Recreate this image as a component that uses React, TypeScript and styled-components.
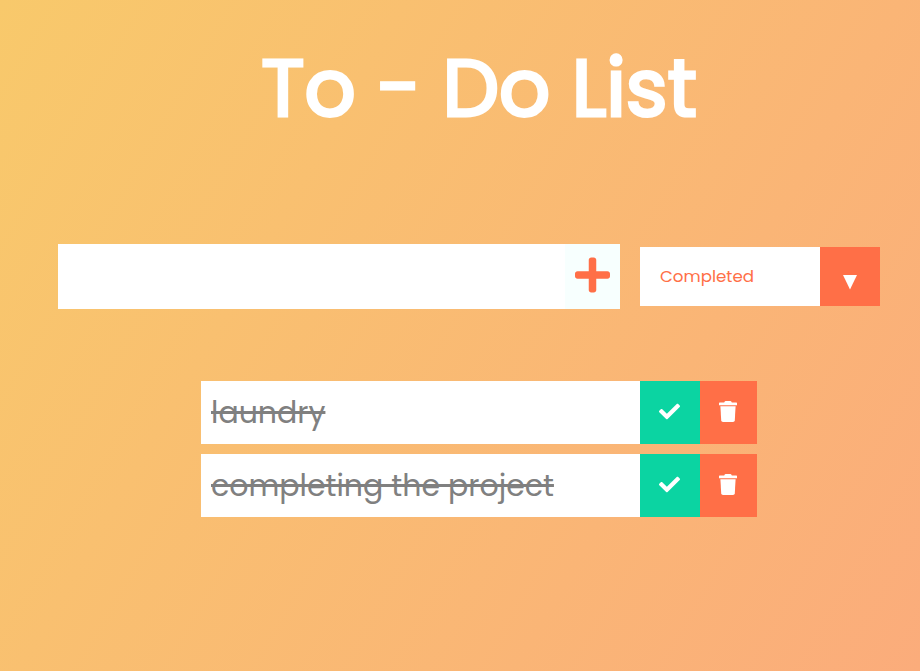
import React from "react";
import styled, { createGlobalStyle } from "styled-components";
import { FaCheck, FaPlus } from "react-icons/fa";

const GlobalStyle = createGlobalStyle`
  * { box-sizing: border-box; margin: 0; padding: 0; }
  body {
    min-height: 100vh;
    color: #fff;
    font-family: Poppins, Inter, sans-serif;
    background: linear-gradient(120deg, #f8c96b, #fbac7b);
  }
`;

const Header = styled.header`
  display: flex;
  justify-content: center;
  height: 244px;
  padding: 28px 0 0 38px;
`;

const Title = styled.h1`
  font-size: 80px;
  font-weight: 400;
  line-height: 121px;
  white-space: nowrap;
  -webkit-text-stroke: 3.2px #fff;
`;

const Form = styled.form`
  display: flex;
  align-items: center;
  height: 65px;
  margin-left: 58px;
`;

const TaskInput = styled.input`
  width: 507px;
  height: 65px;
  padding: 8px;
  border: none;
  outline: none;
  background: #fff;
  color: #ff6f47;
  font: inherit;
  font-size: 32px;
`;

const AddButton = styled.button`
  display: flex;
  align-items: center;
  justify-content: center;
  width: 55px;
  height: 65px;
  padding-bottom: 3px;
  border: none;
  background: #f7fffe;
  color: #ff6f47;
  font-size: 40px;

  svg {
    width: 35px;
  }
`;

const Filter = styled.div`
  display: flex;
  height: 59px;
  margin-left: 20px;
`;

const FilterValue = styled.div`
  width: 180px;
  padding-left: 20px;
  background: #fff;
  color: #ff6f47;
  font-size: 16.67px;
  line-height: 59px;
`;

const FilterArrow = styled.div`
  display: flex;
  justify-content: center;
  width: 60px;
  padding-top: 28px;
  background: #ff6f47;
`;

const TaskList = styled.ul`
  display: flex;
  flex-direction: column;
  gap: 10px;
  width: 556px;
  margin: 72px 0 0 201px;
  list-style: none;
`;

const Task = styled.li`
  display: flex;
  height: 63px;
  background: #fff;
`;

const TaskText = styled.span`
  flex: 1;
  padding-left: 10px;
  color: #808080;
  font-size: 30px;
  line-height: 63px;
  text-decoration: line-through;
  text-decoration-thickness: 3px;
`;

const TaskButton = styled.button<{ $kind: "done" | "remove" }>`
  display: flex;
  align-items: center;
  justify-content: center;
  width: ${(p) => (p.$kind === "done" ? 60 : 57)}px;
  padding: 0 1px 2px 0;
  border: none;
  background: ${(p) => (p.$kind === "done" ? "#0bd4a2" : "#ff6f47")};
  color: #fff;
  font-size: 21px;
`;

const tasks = ["laundry", "completing the project"];

function TrashIcon() {
  return (
    <svg width="18" height="21" viewBox="0 0 18 21" fill="currentColor">
      <path d="M0.7 1.4H5.2L5.7 0.5Q6 0 6.6 0H11.4Q12 0 12.3 0.5L12.8 1.4H17.3Q18 1.4 18 2.1V4.2H0V2.1Q0 1.4 0.7 1.4Z" />
      <path d="M1.4 5.2H16.6L15.8 19.3Q15.7 21 14 21H4Q2.3 21 2.2 19.3Z" />
    </svg>
  );
}

export default function App() {
  return (
    <>
      <GlobalStyle />
      <Header>
        <Title>To - Do List</Title>
      </Header>
      <Form>
        <TaskInput type="text" />
        <AddButton type="button"><FaPlus /></AddButton>
        <Filter>
          <FilterValue>Completed</FilterValue>
          <FilterArrow>
            <svg width="14" height="15" viewBox="0 0 14 15">
              <path d="M0 0H14L7 14.5Z" fill="#fff" />
            </svg>
          </FilterArrow>
        </Filter>
      </Form>
      <TaskList>
        {tasks.map((task) => (
          <Task key={task}>
            <TaskText>{task}</TaskText>
            <TaskButton $kind="done"><FaCheck /></TaskButton>
            <TaskButton $kind="remove"><TrashIcon /></TaskButton>
          </Task>
        ))}
      </TaskList>
    </>
  );
}
